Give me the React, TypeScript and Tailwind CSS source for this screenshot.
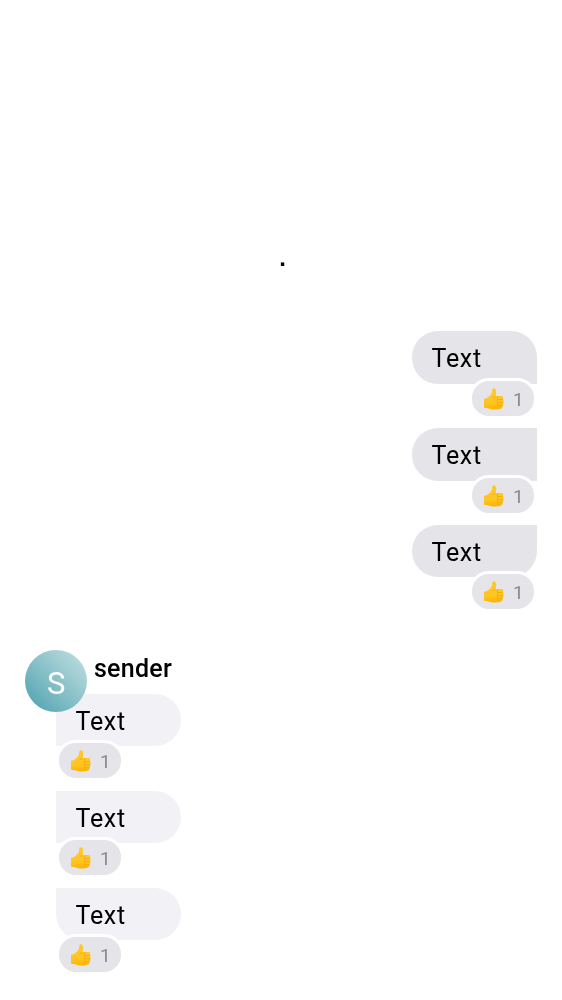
type Position = 'first' | 'middle' | 'last';

const POSITIONS: Position[] = ['first', 'middle', 'last'];

const OUTGOING_CORNERS: Record<Position, string> = {
  first: 'rounded-[26px] rounded-br-none',
  middle: 'rounded-l-[26px]',
  last: 'rounded-[26px] rounded-tr-none',
};

const INCOMING_CORNERS: Record<Position, string> = {
  first: 'rounded-r-[26px]',
  middle: 'rounded-r-[26px]',
  last: 'rounded-[26px] rounded-tl-none',
};

function ThumbsUp() {
  return (
    <svg
      viewBox="0 0.3 20 21"
      preserveAspectRatio="none"
      className="h-[22px] w-5 shrink-0"
      role="img"
      aria-label="Thumbs up"
    >
      <defs>
        <linearGradient id="thumb" x1="0" y1="0" x2="0" y2="1">
          <stop offset="0" stopColor="#ffca28" />
          <stop offset="0.7" stopColor="#ffc422" />
          <stop offset="1" stopColor="#ffb300" />
        </linearGradient>
      </defs>
      <path
        fill="url(#thumb)"
        d="M0 11.3C0 10.4 1.3 10.4 2.5 10.2C4.8 9.2 6.6 7.2 7.7 5.4C8.4 4.2 8 2.7 8.4 1.5C8.9.2 10.8.2 11.6 1.4C12.8 3.2 12 6 11.4 8C13.2 7.9 15.7 7.8 17.6 8C19.3 8.2 19.7 10.2 18.7 11.1C19.9 11.6 19.9 13.5 18.9 14.2C19.8 15 19.4 16.7 18.3 17.1C18.9 18.1 18.3 19.4 17 19.8C14.5 20.9 10 21.2 7 20.5C4.8 20 4.2 19.4 2 19.4C.6 19.4 0 19 0 18Z"
      />
      <path
        fill="none"
        stroke="#f0a90a"
        strokeWidth="0.8"
        strokeLinecap="round"
        d="M11.4 8.1C10.7 8.9 9.8 9.4 9 9.6M18.7 11.1C17 11.6 15 11.5 13.8 11.1C12.8 11.7 13 13.5 14 14.1C15.6 14.5 17.5 14.6 18.9 14.2M14 14.1C13.1 15 13.3 16.5 14.2 17C15.6 17.4 17 17.4 18.3 17.1M14.2 17C13.4 17.8 13.5 19 14.3 19.7M13.8 11.1C13 10.4 13 9.2 13.7 8.5"
      />
    </svg>
  );
}

function Reaction() {
  return (
    <div className="flex h-[41px] w-[68px] items-center rounded-[20px] border-[3px] border-white bg-[#e5e4e9] pt-px pl-3">
      <ThumbsUp />
      <span className="ml-[9px] pt-[2px] text-[19px] leading-[22px] text-[#8a898e]">1</span>
    </div>
  );
}

function Message({ position, outgoing = false }: { position: Position; outgoing?: boolean }) {
  return (
    <div className={`flex h-[96.875px] w-[125px] flex-col ${outgoing ? 'items-end' : 'items-start'}`}>
      <div
        className={`flex w-full shrink-0 items-center pl-[19.5px] text-[25px] leading-[30px] tracking-[0.7px] ${
          outgoing
            ? `h-[52.65px] bg-[#e5e4e9] pt-[3.4px] ${OUTGOING_CORNERS[position]}`
            : `h-[52px] bg-[#f2f1f6] pt-[3.6px] ${INCOMING_CORNERS[position]}`
        }`}
      >
        Text
      </div>
      <div className="relative -mt-[5.95px]">
        <Reaction />
      </div>
    </div>
  );
}

export default function App() {
  return (
    <main className="flex h-[1000px] w-[562px] flex-col overflow-hidden bg-white font-['Roboto',sans-serif] text-black">
      <div className="flex h-[331px] shrink-0 items-end justify-center pb-[65px] pl-[3px] font-['Liberation_Sans',sans-serif] text-[24px] leading-[30px] font-bold will-change-transform">
        <span className="-mb-[7px]">.</span>
      </div>
      <section className="flex h-[319px] shrink-0 flex-col items-end pr-[25px] will-change-transform">
        {POSITIONS.map((position) => (
          <Message key={position} position={position} outgoing />
        ))}
      </section>
      <section className="flex flex-col pl-[25px] will-change-transform">
        <header className="relative z-10 flex h-[44px] items-start">
          <div className="flex size-[62.4px] shrink-0 items-center justify-center rounded-full bg-linear-to-tr from-[#46a0ae] to-[#c5e2e3] pt-[4px] text-[31px] leading-none text-white">
            S
          </div>
          <span className="pt-[4px] pl-[6.5px] text-[25px] leading-[30px] font-medium tracking-[0.3px]">sender</span>
        </header>
        <div className="flex flex-col pl-[31px]">
          {POSITIONS.map((position) => (
            <Message key={position} position={position} />
          ))}
        </div>
      </section>
    </main>
  );
}
